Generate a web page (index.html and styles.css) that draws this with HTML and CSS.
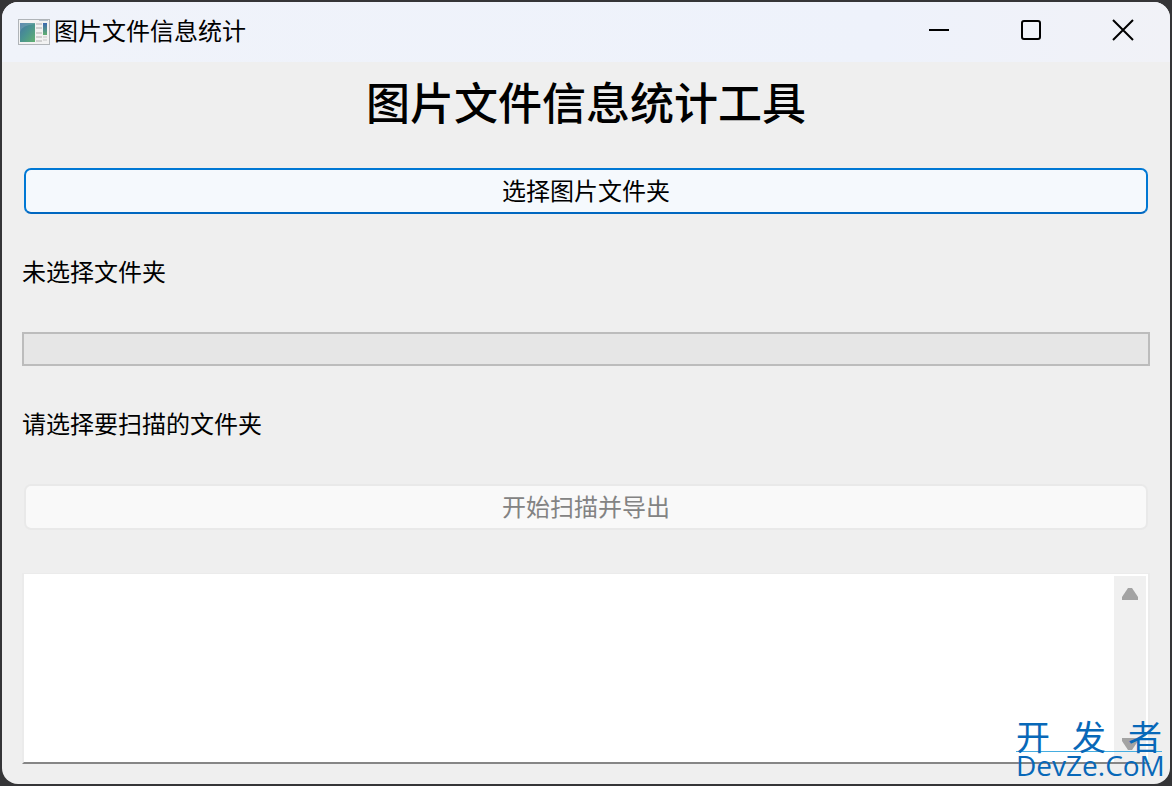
FILE: index.html
```html
<!DOCTYPE html>
<html lang="zh-CN">
<head>
	<meta charset="utf-8">
	<title>图片文件信息统计</title>
	<link rel="stylesheet" href="styles.css">
</head>
<body>
	<div class="window">
		<div class="titlebar">
			<svg class="app-icon" width="32" height="26" viewBox="0 0 32 26">
				<defs>
					<linearGradient id="pane" x1="0" y1="0" x2="1" y2="1">
						<stop offset="0" stop-color="#4474a4"/>
						<stop offset="0.5" stop-color="#4a9490"/>
						<stop offset="1" stop-color="#62b070"/>
					</linearGradient>
					<linearGradient id="bar" x1="0" y1="0" x2="0" y2="1">
						<stop offset="0" stop-color="#3c68b0"/>
						<stop offset="1" stop-color="#62b070"/>
					</linearGradient>
				</defs>
				<rect x="0.5" y="0.5" width="31" height="25" fill="#f2f2f2" stroke="#b0b4b8"/>
				<path d="M21 1.500h9" stroke="#b4c0cc"/>
				<rect x="2" y="4" width="15" height="19" fill="url(#pane)"/>
				<path d="M2 13Q4 6 17 5V4H2z" fill="#fff" opacity="0.15"/>
				<path d="M18 5h6M18 9h6M18 14h6M18 18h6M18 22h6" stroke="#d0d0d0" stroke-width="2"/>
				<rect x="25" y="4" width="4" height="12" fill="url(#bar)"/>
				<path d="M25 18h4M25 21h4" stroke="#dcdcdc" stroke-width="2"/>
			</svg>
			<span class="caption">图片文件信息统计</span>
			<button class="win-btn" type="button" aria-label="最小化">
				<svg width="22" height="22" viewBox="0 0 22 22"><path d="M1 11h20"/></svg>
			</button>
			<button class="win-btn" type="button" aria-label="最大化">
				<svg width="22" height="22" viewBox="0 0 22 22"><rect x="2" y="2" width="18" height="18" rx="2"/></svg>
			</button>
			<button class="win-btn" type="button" aria-label="关闭">
				<svg width="22" height="22" viewBox="0 0 22 22"><path d="M1 1l20 20M21 1L1 21"/></svg>
			</button>
		</div>
		<div class="content">
			<h1>图片文件信息统计工具</h1>
			<button class="btn btn-focus" type="button">选择图片文件夹</button>
			<p class="label">未选择文件夹</p>
			<div class="progress" role="progressbar" aria-label="扫描进度" aria-valuenow="0"></div>
			<p class="label">请选择要扫描的文件夹</p>
			<button class="btn" type="button" disabled>开始扫描并导出</button>
			<div class="log">
				<textarea aria-label="日志" readonly></textarea>
				<div class="scrollbar">
					<button type="button" aria-label="向上滚动"><svg width="16" height="12" viewBox="0 0 16 12"><path d="M6 0h4l6 9v3H0V9z"/></svg></button>
					<button type="button" aria-label="向下滚动"><svg width="16" height="12" viewBox="0 0 16 12"><path d="M0 0h16v3l-6 9H6L0 3z"/></svg></button>
				</div>
			</div>
		</div>
	</div>
	<div class="watermark">
		<div class="mark-cn"><span>开</span><span>发</span><span>者</span></div>
		<div class="mark-en">DevZe.CoM</div>
	</div>
</body>
</html>
```
FILE: styles.css
```css
* {margin: 0; padding: 0; box-sizing: border-box;}
body {position: relative; min-height: 100vh; padding: 2px; display: flex; background: #353537; color: #000; font: 24px/32px "Noto Sans CJK SC", sans-serif;}
button {font: inherit; color: inherit; border: 0; background: none;}
svg {display: block;}

.window {flex: 1; display: flex; flex-direction: column; background: #efefef; border-radius: 16px; overflow: hidden;}

.titlebar {display: flex; align-items: center; height: 60px; padding: 0 1px 0 16px; background: linear-gradient(90deg, #f0f3fa, #eef2fb 75%, #f1f2f7);}
.app-icon {margin-right: 4px;}
.caption {flex: 1; line-height: 56px; height: 60px;}
.win-btn {display: flex; align-items: center; justify-content: center; width: 92px; height: 56px; align-self: flex-start;}
.win-btn svg {fill: none; stroke: #000; stroke-width: 2;}

.content {flex: 1; display: flex; flex-direction: column; gap: 43px; padding: 21px 20px 20px;}
h1 {padding-bottom: 6px; font-size: 44px; line-height: 36px; font-weight: 500; text-align: center;}
.label {padding-bottom: 4px; line-height: 28px;}
.btn {height: 46px; margin: 0 2px; padding-bottom: 2px; border: 2px solid #0078d4; border-radius: 7px; line-height: 40px;}
.btn-focus {background: #f5f9fd; border-bottom-color: #0067c0;}
.btn:disabled {background: #f9f9f9; border-color: #e9e9e9; color: #838383;}
.progress {height: 34px; background: #e6e6e6; border: 2px solid #bcbcbc;}

.log {flex: 1; display: flex; min-height: 120px; background: #fff; border: 2px solid #ebebeb; border-top-width: 1px; border-bottom-color: #868686;}
.log textarea {flex: 1; padding: 4px 8px; border: 0; outline: 0; resize: none; background: #fff; font: inherit;}
.scrollbar {display: flex; flex-direction: column; justify-content: space-between; width: 32px; margin: 2px 2px 0 0; background: #f0f0f0;}
.scrollbar button {display: flex; align-items: center; justify-content: center; height: 36px;}
.scrollbar svg {fill: #a3a3a3;}

.watermark {position: absolute; right: 10px; bottom: 8px; width: 146px; color: #0868b8;}
.mark-cn {display: flex; justify-content: space-between; font-size: 34px; line-height: 30px; border-bottom: 1px solid #45ade0;}
.mark-en {font: 28px/26px "Open Sans", sans-serif;}
```
